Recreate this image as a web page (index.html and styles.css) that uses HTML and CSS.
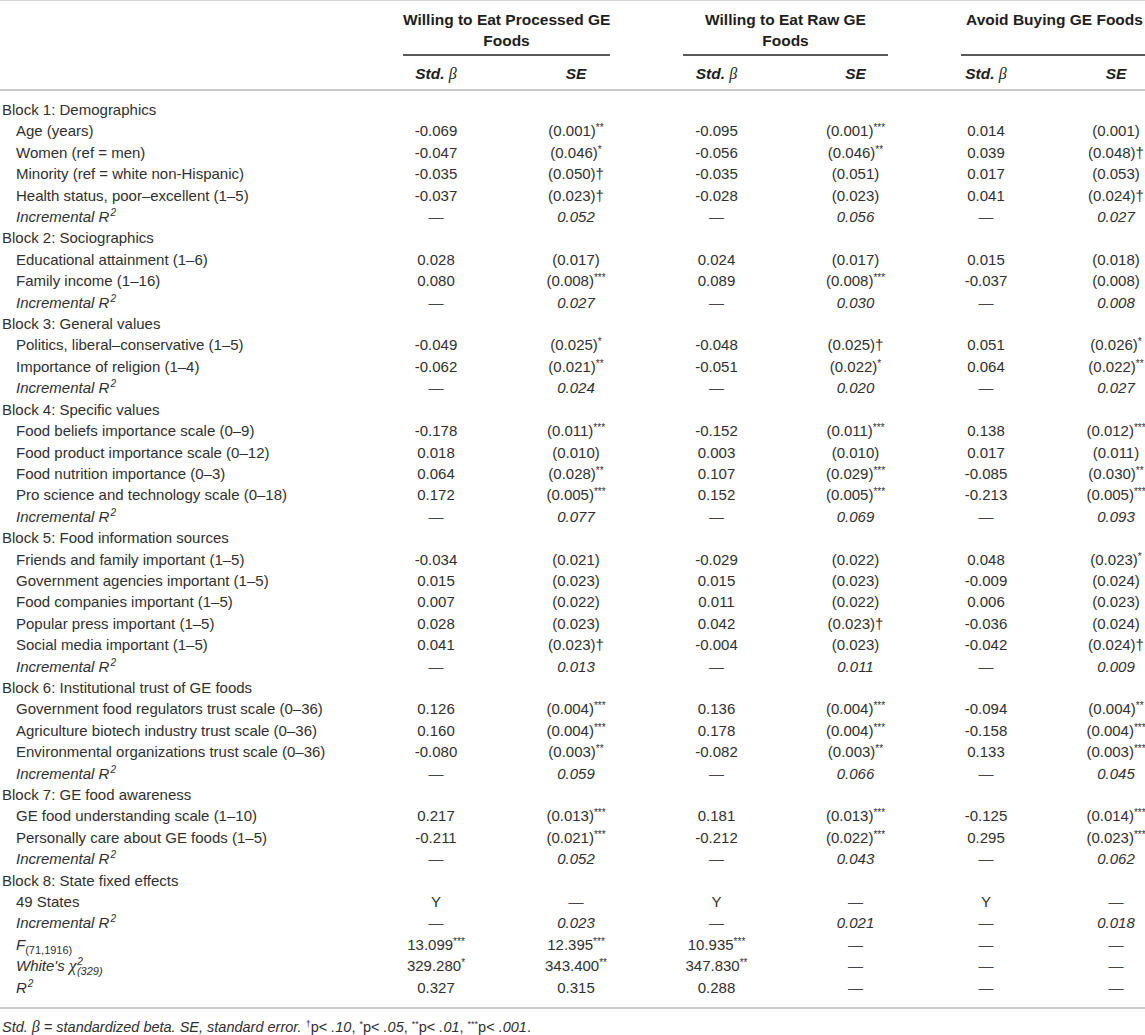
FILE: index.html
```html
<!DOCTYPE html>
<html lang="en">
<head>
<meta charset="utf-8">
<title>Regression results</title>
<link rel="stylesheet" href="styles.css">
</head>
<body>
<div class="page">
<table class="reg">
  <colgroup>
    <col class="w-label"><col class="w-c1"><col class="w-c2"><col class="w-c3"><col class="w-c4"><col class="w-c5"><col class="w-c6">
  </colgroup>
  <thead>
    <tr class="grp">
      <th></th>
      <th colspan="2"><div class="gt">Willing to Eat Processed GE<br>Foods</div></th>
      <th colspan="2"><div class="gt">Willing to Eat Raw GE<br>Foods</div></th>
      <th colspan="2"><div class="gt">Avoid Buying GE Foods</div></th>
    </tr>
    <tr class="sub">
      <th></th>
      <th><i>Std.</i> <span class="beta">β</span></th><th><i>SE</i></th>
      <th><i>Std.</i> <span class="beta">β</span></th><th><i>SE</i></th>
      <th><i>Std.</i> <span class="beta">β</span></th><th><i>SE</i></th>
    </tr>
  </thead>
  <tbody>
    <tr class="blk first"><td>Block 1: Demographics</td><td></td><td></td><td></td><td></td><td></td><td></td></tr>
    <tr><td class="ind">Age (years)</td><td>-0.069</td><td>(0.001)<sup>**</sup></td><td>-0.095</td><td>(0.001)<sup>***</sup></td><td>0.014</td><td>(0.001)</td></tr>
    <tr><td class="ind">Women (ref = men)</td><td>-0.047</td><td>(0.046)<sup>*</sup></td><td>-0.056</td><td>(0.046)<sup>**</sup></td><td>0.039</td><td>(0.048)†</td></tr>
    <tr><td class="ind">Minority (ref = white non-Hispanic)</td><td>-0.035</td><td>(0.050)†</td><td>-0.035</td><td>(0.051)</td><td>0.017</td><td>(0.053)</td></tr>
    <tr><td class="ind">Health status, poor–excellent (1–5)</td><td>-0.037</td><td>(0.023)†</td><td>-0.028</td><td>(0.023)</td><td>0.041</td><td>(0.024)†</td></tr>
    <tr class="inc"><td class="ind"><i>Incremental R<sup class="sq">2</sup></i></td><td class="dash">—</td><td><i>0.052</i></td><td class="dash">—</td><td><i>0.056</i></td><td class="dash">—</td><td><i>0.027</i></td></tr>

    <tr class="blk"><td>Block 2: Sociographics</td><td></td><td></td><td></td><td></td><td></td><td></td></tr>
    <tr><td class="ind">Educational attainment (1–6)</td><td>0.028</td><td>(0.017)</td><td>0.024</td><td>(0.017)</td><td>0.015</td><td>(0.018)</td></tr>
    <tr><td class="ind">Family income (1–16)</td><td>0.080</td><td>(0.008)<sup>***</sup></td><td>0.089</td><td>(0.008)<sup>***</sup></td><td>-0.037</td><td>(0.008)</td></tr>
    <tr class="inc"><td class="ind"><i>Incremental R<sup class="sq">2</sup></i></td><td class="dash">—</td><td><i>0.027</i></td><td class="dash">—</td><td><i>0.030</i></td><td class="dash">—</td><td><i>0.008</i></td></tr>

    <tr class="blk"><td>Block 3: General values</td><td></td><td></td><td></td><td></td><td></td><td></td></tr>
    <tr><td class="ind">Politics, liberal–conservative (1–5)</td><td>-0.049</td><td>(0.025)<sup>*</sup></td><td>-0.048</td><td>(0.025)†</td><td>0.051</td><td>(0.026)<sup>*</sup></td></tr>
    <tr><td class="ind">Importance of religion (1–4)</td><td>-0.062</td><td>(0.021)<sup>**</sup></td><td>-0.051</td><td>(0.022)<sup>*</sup></td><td>0.064</td><td>(0.022)<sup>**</sup></td></tr>
    <tr class="inc"><td class="ind"><i>Incremental R<sup class="sq">2</sup></i></td><td class="dash">—</td><td><i>0.024</i></td><td class="dash">—</td><td><i>0.020</i></td><td class="dash">—</td><td><i>0.027</i></td></tr>

    <tr class="blk"><td>Block 4: Specific values</td><td></td><td></td><td></td><td></td><td></td><td></td></tr>
    <tr><td class="ind">Food beliefs importance scale (0–9)</td><td>-0.178</td><td>(0.011)<sup>***</sup></td><td>-0.152</td><td>(0.011)<sup>***</sup></td><td>0.138</td><td>(0.012)<sup>***</sup></td></tr>
    <tr><td class="ind">Food product importance scale (0–12)</td><td>0.018</td><td>(0.010)</td><td>0.003</td><td>(0.010)</td><td>0.017</td><td>(0.011)</td></tr>
    <tr><td class="ind">Food nutrition importance (0–3)</td><td>0.064</td><td>(0.028)<sup>**</sup></td><td>0.107</td><td>(0.029)<sup>***</sup></td><td>-0.085</td><td>(0.030)<sup>**</sup></td></tr>
    <tr><td class="ind">Pro science and technology scale (0–18)</td><td>0.172</td><td>(0.005)<sup>***</sup></td><td>0.152</td><td>(0.005)<sup>***</sup></td><td>-0.213</td><td>(0.005)<sup>***</sup></td></tr>
    <tr class="inc"><td class="ind"><i>Incremental R<sup class="sq">2</sup></i></td><td class="dash">—</td><td><i>0.077</i></td><td class="dash">—</td><td><i>0.069</i></td><td class="dash">—</td><td><i>0.093</i></td></tr>

    <tr class="blk"><td>Block 5: Food information sources</td><td></td><td></td><td></td><td></td><td></td><td></td></tr>
    <tr><td class="ind">Friends and family important (1–5)</td><td>-0.034</td><td>(0.021)</td><td>-0.029</td><td>(0.022)</td><td>0.048</td><td>(0.023)<sup>*</sup></td></tr>
    <tr><td class="ind">Government agencies important (1–5)</td><td>0.015</td><td>(0.023)</td><td>0.015</td><td>(0.023)</td><td>-0.009</td><td>(0.024)</td></tr>
    <tr><td class="ind">Food companies important (1–5)</td><td>0.007</td><td>(0.022)</td><td>0.011</td><td>(0.022)</td><td>0.006</td><td>(0.023)</td></tr>
    <tr><td class="ind">Popular press important (1–5)</td><td>0.028</td><td>(0.023)</td><td>0.042</td><td>(0.023)†</td><td>-0.036</td><td>(0.024)</td></tr>
    <tr><td class="ind">Social media important (1–5)</td><td>0.041</td><td>(0.023)†</td><td>-0.004</td><td>(0.023)</td><td>-0.042</td><td>(0.024)†</td></tr>
    <tr class="inc"><td class="ind"><i>Incremental R<sup class="sq">2</sup></i></td><td class="dash">—</td><td><i>0.013</i></td><td class="dash">—</td><td><i>0.011</i></td><td class="dash">—</td><td><i>0.009</i></td></tr>

    <tr class="blk"><td>Block 6: Institutional trust of GE foods</td><td></td><td></td><td></td><td></td><td></td><td></td></tr>
    <tr><td class="ind">Government food regulators trust scale (0–36)</td><td>0.126</td><td>(0.004)<sup>***</sup></td><td>0.136</td><td>(0.004)<sup>***</sup></td><td>-0.094</td><td>(0.004)<sup>**</sup></td></tr>
    <tr><td class="ind">Agriculture biotech industry trust scale (0–36)</td><td>0.160</td><td>(0.004)<sup>***</sup></td><td>0.178</td><td>(0.004)<sup>***</sup></td><td>-0.158</td><td>(0.004)<sup>***</sup></td></tr>
    <tr><td class="ind">Environmental organizations trust scale (0–36)</td><td>-0.080</td><td>(0.003)<sup>**</sup></td><td>-0.082</td><td>(0.003)<sup>**</sup></td><td>0.133</td><td>(0.003)<sup>***</sup></td></tr>
    <tr class="inc"><td class="ind"><i>Incremental R<sup class="sq">2</sup></i></td><td class="dash">—</td><td><i>0.059</i></td><td class="dash">—</td><td><i>0.066</i></td><td class="dash">—</td><td><i>0.045</i></td></tr>

    <tr class="blk"><td>Block 7: GE food awareness</td><td></td><td></td><td></td><td></td><td></td><td></td></tr>
    <tr><td class="ind">GE food understanding scale (1–10)</td><td>0.217</td><td>(0.013)<sup>***</sup></td><td>0.181</td><td>(0.013)<sup>***</sup></td><td>-0.125</td><td>(0.014)<sup>***</sup></td></tr>
    <tr><td class="ind">Personally care about GE foods (1–5)</td><td>-0.211</td><td>(0.021)<sup>***</sup></td><td>-0.212</td><td>(0.022)<sup>***</sup></td><td>0.295</td><td>(0.023)<sup>***</sup></td></tr>
    <tr class="inc"><td class="ind"><i>Incremental R<sup class="sq">2</sup></i></td><td class="dash">—</td><td><i>0.052</i></td><td class="dash">—</td><td><i>0.043</i></td><td class="dash">—</td><td><i>0.062</i></td></tr>

    <tr class="blk"><td>Block 8: State fixed effects</td><td></td><td></td><td></td><td></td><td></td><td></td></tr>
    <tr><td class="ind">49 States</td><td>Y</td><td class="dash">—</td><td>Y</td><td class="dash">—</td><td>Y</td><td class="dash">—</td></tr>
    <tr class="inc"><td class="ind"><i>Incremental R<sup class="sq">2</sup></i></td><td class="dash">—</td><td><i>0.023</i></td><td class="dash">—</td><td><i>0.021</i></td><td class="dash">—</td><td><i>0.018</i></td></tr>
    <tr><td class="ind"><i>F</i><sub class="df">(71,1916)</sub></td><td>13.099<sup>***</sup></td><td>12.395<sup>***</sup></td><td>10.935<sup>***</sup></td><td class="dash">—</td><td class="dash">—</td><td class="dash">—</td></tr>
    <tr><td class="ind"><i>White's <span class="chi">χ</span><sup class="sq">2</sup><sub class="df under">(329)</sub></i></td><td>329.280<sup>*</sup></td><td>343.400<sup>**</sup></td><td>347.830<sup>**</sup></td><td class="dash">—</td><td class="dash">—</td><td class="dash">—</td></tr>
    <tr class="last"><td class="ind"><i>R<sup class="sq">2</sup></i></td><td>0.327</td><td>0.315</td><td>0.288</td><td class="dash">—</td><td class="dash">—</td><td class="dash">—</td></tr>
  </tbody>
</table>
<p class="note"><i>Std. <span class="beta">β</span> = standardized beta. SE, standard error. </i><sup class="fn">†</sup>p&lt; <i>.10</i>, <sup class="fn">*</sup>p&lt; <i>.05</i>, <sup class="fn">**</sup>p&lt; <i>.01</i>, <sup class="fn">***</sup>p&lt; <i>.001</i>.</p>
</div>
</body>
</html>
```

FILE: styles.css
```css
html, body {
  margin: 0;
  padding: 0;
  background: #ffffff;
}

body {
  font-family: "Liberation Sans", Arial, Helvetica, sans-serif;
  font-size: 15px;
  color: #303030;
}

.page {
  width: 1145px;
  overflow: hidden;
  border-top: 1px solid #d4d4d4;
}

.reg {
  width: 1184px;
  table-layout: fixed;
  border-collapse: separate;
  border-spacing: 0;
}

.w-label { width: 366px; }
.w-c1 { width: 140px; }
.w-c2 { width: 140px; }
.w-c3 { width: 141px; }
.w-c4 { width: 137px; }
.w-c5 { width: 124px; }
.w-c6 { width: 136px; }

th {
  font-weight: bold;
  font-size: 15.5px;
  color: #1e1e1e;
  text-align: center;
  white-space: nowrap;
}

.grp th {
  padding: 8px 0 0;
  vertical-align: top;
}

.gt {
  height: 42px;
  margin: 0 36px 0 37px;
  padding-bottom: 3px;
  line-height: 21px;
  border-bottom: 2px solid #5a5a5a;
  text-align: center;
}

.sub th {
  padding: 7px 0 5px;
  line-height: 21px;
  border-bottom: 2px solid #c9c9c9;
}

.beta {
  font-family: "Liberation Serif", "Times New Roman", serif;
  font-style: italic;
  font-weight: normal;
  font-size: 16px;
}

td {
  padding: 0;
  line-height: 21.4px;
  text-align: center;
  white-space: nowrap;
}

td:first-child {
  text-align: left;
  padding-left: 2px;
}

td.ind {
  padding-left: 16px;
}

tr.first td {
  padding-top: 8px;
}

tr.last td {
  padding-bottom: 9px;
  border-bottom: 2px solid #c9c9c9;
}

.dash {
  color: #444444;
}

sup {
  font-size: 10px;
  line-height: 0;
  vertical-align: 5px;
}

sup.sq {
  font-size: 10px;
  vertical-align: 6px;
  margin-left: 1px;
}

sub.df {
  font-size: 11px;
  font-style: normal;
  line-height: 0;
  vertical-align: -4px;
}

sub.under {
  margin-left: -6px;
  font-style: italic;
}

.chi {
  font-family: "Liberation Serif", "Times New Roman", serif;
  font-style: italic;
  font-size: 17px;
}

.note {
  margin: 0;
  padding: 8px 0 0 2px;
  font-size: 14.5px;
  line-height: 20px;
}

sup.fn {
  font-size: 9px;
  vertical-align: 5px;
}
```
